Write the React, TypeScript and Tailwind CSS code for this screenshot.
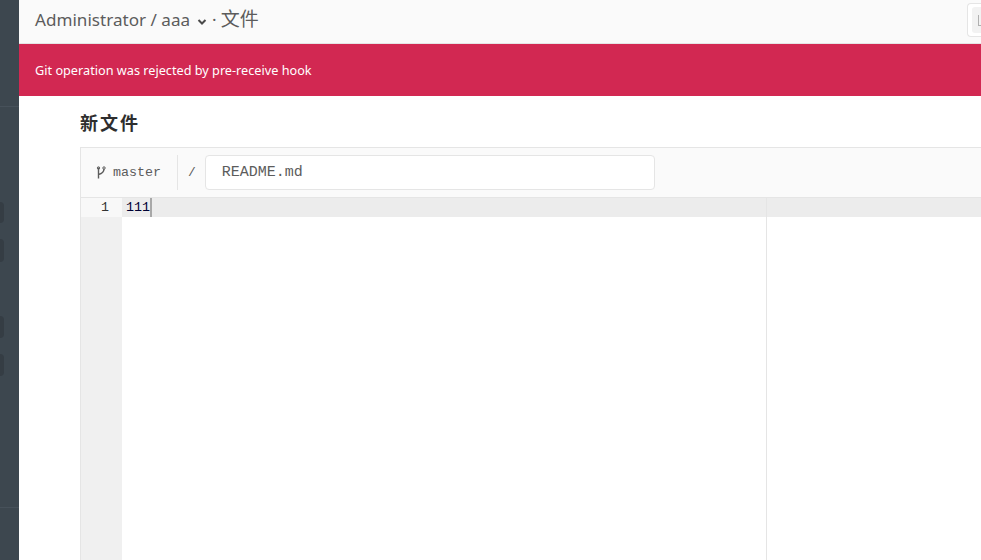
function SidebarStub({ className }: { className: string }) {
  return <div className={`w-[4px] rounded-r-[4px] bg-[#353d44] ${className}`} />;
}

export default function App() {
  return (
    <div className="flex h-[560px] w-[981px] overflow-hidden bg-white font-['Noto_Sans','Noto_Sans_CJK_SC',sans-serif]">
      {/* Collapsed sidebar */}
      <aside className="flex w-[19px] shrink-0 flex-col bg-[#3d474f]">
        <div className="h-[107px] shrink-0 border-b border-[#47515a]" />
        <SidebarStub className="mt-[95px] h-[21px]" />
        <SidebarStub className="mt-[16px] h-[23px]" />
        <SidebarStub className="mt-[54px] h-[22px]" />
        <SidebarStub className="mt-[16px] h-[22px]" />
        <div className="mt-[131px] h-[1px] shrink-0 bg-[#47515a]" />
      </aside>

      <main className="flex w-[962px] shrink-0 flex-col overflow-hidden">
        {/* Header */}
        <header className="flex h-[44px] shrink-0 items-center justify-between border-b border-[#e5e5e5] bg-[#fafafa] pl-[16px]">
          <div className="flex items-center pb-[4px] text-[17.1px] text-[#5c5c5c]">
            <span>Administrator / aaa</span>
            <svg width="10" height="8" viewBox="0 0 10 8" className="ml-[7px] mt-[4px]" fill="none">
              <path d="M1.5 2 L5 5.5 L8.5 2" stroke="#4a4a4a" strokeWidth="2" />
            </svg>
            <span className="ml-[5px]">·</span>
            <span className="ml-[4px] text-[19px]">文件</span>
          </div>
          <div className="mb-[3px] flex h-[34px] w-[14px] shrink-0 items-center justify-end rounded-l-[4px] border-y border-l border-[#e5e5e5] bg-white">
            <div className="flex h-[26px] w-[9px] items-center rounded-l-[3px] bg-[#f2f2f2] pl-[6px]">
              <div className="h-[11px] w-[3px] border-b border-l border-[#b0b0b0]" />
            </div>
          </div>
        </header>

        {/* Alert */}
        <div className="flex h-[52px] shrink-0 items-center bg-[#d22852] pl-[16px] pt-[2px] text-[12.7px] text-white">
          Git operation was rejected by pre-receive hook
        </div>

        {/* Content */}
        <div className="flex min-h-0 flex-1 flex-col pl-[61px]">
          <h1 className="flex h-[51px] shrink-0 items-center pt-[4px] text-[18px] font-bold tracking-[2px] text-[#2e2e2e]">新文件</h1>
          <div className="flex min-h-0 flex-1 flex-col border-l border-t border-[#e5e5e5]">
            {/* File toolbar */}
            <div className="flex h-[50px] shrink-0 items-center border-b border-[#e5e5e5] bg-[#fafafa] font-['Liberation_Mono',monospace] text-[#5c5c5c]">
              <div className="flex h-[35px] w-[97px] shrink-0 items-center border-r border-[#e5e5e5] pl-[15px] text-[13.33px]">
                <svg width="10" height="13" viewBox="0 0 10 13" fill="none" className="mr-[7px]">
                  <path d="M2.5 1.5 V12.5 M2.5 8.5 C6 7.5 8 6 8 3" stroke="#5c5c5c" strokeWidth="1.4" />
                  <circle cx="2.5" cy="2" r="1.2" stroke="#5c5c5c" />
                  <circle cx="8" cy="2" r="1.2" stroke="#5c5c5c" />
                </svg>
                master
              </div>
              <span className="ml-[10px] text-[13px]">/</span>
              <div className="ml-[9px] flex h-[35px] w-[450px] shrink-0 items-center rounded-[4px] border border-[#e5e5e5] bg-white pl-[16px] pt-[1px] text-[15px]">
                README.md
              </div>
            </div>

            {/* Editor */}
            <div className="relative flex min-h-0 flex-1 font-['Liberation_Mono',monospace] text-[13.33px] leading-[19px]">
              <div className="w-[41px] shrink-0 bg-[#f0f0f0]">
                <div className="h-[19px] bg-[#f8f8f8] pr-[13px] text-right text-[#333333]">1</div>
              </div>
              <div className="min-w-0 flex-1">
                <div className="flex h-[19px] items-start bg-[#ececec] pl-[4px] text-[#000033]">
                  <span>111</span>
                  <span className="h-[19px] w-[2px] bg-[#a8a8a8]" />
                </div>
              </div>
              <div className="absolute bottom-0 left-[685px] top-0 w-[1px] bg-[#e5e5e5]" />
            </div>
          </div>
        </div>
      </main>
    </div>
  );
}
